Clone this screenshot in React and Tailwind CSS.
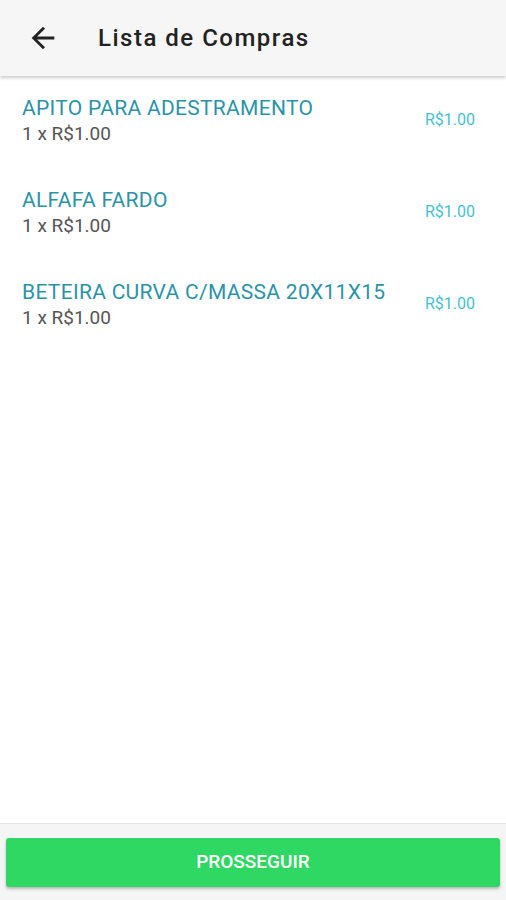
const items = [
  { name: "APITO PARA ADESTRAMENTO", qty: 1, price: "R$1.00" },
  { name: "ALFAFA FARDO", qty: 1, price: "R$1.00" },
  { name: "BETEIRA CURVA C/MASSA 20X11X15", qty: 1, price: "R$1.00" },
];

const BackArrow = () => (
  <svg width="34" height="34" viewBox="0 0 24 24" fill="currentColor">
    <path d="M20 11H7.83l5.59-5.59L12 4l-8 8 8 8 1.41-1.41L7.83 13H20v-2z" />
  </svg>
);

const App = () => {
  return (
    <div className="flex flex-col h-[900px] w-full bg-white font-['Roboto',sans-serif]">
      <header className="relative z-10 flex items-center h-[76px] bg-[#f6f6f6] shadow-[0_2px_3px_rgba(0,0,0,0.2)]">
        <button className="ml-[26px] text-[#222]">
          <BackArrow />
        </button>
        <h1 className="ml-[38px] text-[24px] tracking-[1.5px] font-medium text-[#222]">Lista de Compras</h1>
      </header>

      <main className="flex-1 pt-[18px]">
        {items.map((item, index) => (
          <div key={index} className="flex items-center justify-between h-[92px] pl-[22px] pr-[31px] pb-[40px]">
            <div>
              <p className="text-[21px] leading-[28px] tracking-[0.3px] text-[#2b93a8]">{item.name}</p>
              <p className="text-[19px] leading-[24px] text-[#555]">
                {item.qty} x {item.price}
              </p>
            </div>
            <span className="text-[16px] text-[#45c1d2]">{item.price}</span>
          </div>
        ))}
      </main>

      <footer className="h-[77px] border-t border-[#e6e6e6] bg-[#f5f5f5] px-[6px] pt-[14px]">
        <button className="w-full h-[49px] rounded-[3px] bg-[#2fd862] text-white text-[19px] font-medium shadow-[0_2px_3px_rgba(0,0,0,0.25)]">
          PROSSEGUIR
        </button>
      </footer>
    </div>
  );
};

export default App;
